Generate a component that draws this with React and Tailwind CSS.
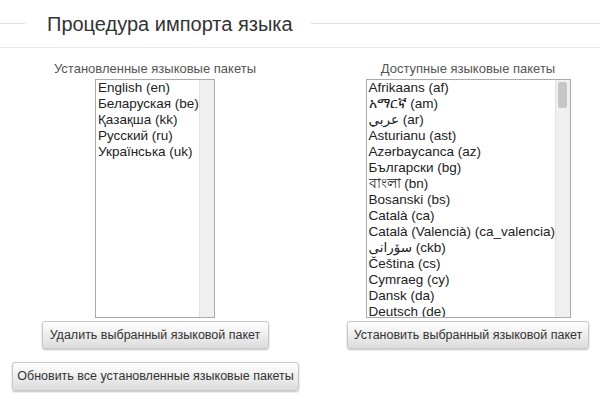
import React from 'react';

const installed = ['English (en)', 'Беларуская (be)', 'Қазақша (kk)', 'Русский (ru)', 'Українська (uk)'];

const available = [
  'Afrikaans (af)',
  'አማርኛ (am)',
  'عربي (ar)',
  'Asturianu (ast)',
  'Azərbaycanca (az)',
  'Български (bg)',
  'বাংলা (bn)',
  'Bosanski (bs)',
  'Català (ca)',
  'Català (Valencià) (ca_valencia)',
  'سۆرانی (ckb)',
  'Čeština (cs)',
  'Cymraeg (cy)',
  'Dansk (da)',
  'Deutsch (de)',
];

function Button({ children, className = '' }) {
  return (
    <button
      className={`h-[28px] whitespace-nowrap rounded-[3px] border border-[#c8c8c8] bg-gradient-to-b from-white to-[#dcdcdc] text-[12.5px] text-[#333] shadow-[0_1px_2px_rgba(0,0,0,0.25)] ${className}`}
    >
      {children}
    </button>
  );
}

function ListBox({ items, width, scrollable }) {
  return (
    <div className={`relative h-[239px] border border-[#aaa] bg-white overflow-hidden ${width}`}>
      <div className="pl-[2px] text-[13.5px] leading-[16px] text-[#222]">
        {items.map((it) => (
          <div key={it} className="whitespace-nowrap text-left" dir="ltr">
            {it}
          </div>
        ))}
      </div>
      <div className="absolute right-0 top-0 h-full w-[15px] border-l border-[#e2e2e2] bg-[#f0f0f0]">
        {scrollable && <div className="mx-auto mt-[2px] h-[26px] w-[9px] rounded-[2px] bg-[#c6c6c6]" />}
      </div>
    </div>
  );
}

export default function App() {
  return (
    <div className="w-[600px] h-[398px] bg-white overflow-hidden" style={{ fontFamily: '"Liberation Sans", Arial, "DejaVu Sans", "Noto Sans", sans-serif' }}>
      {/* Heading */}
      <div className="flex items-center h-[47px]">
        <div className="w-[25px] h-px bg-[#e0e0e0]" />
        <h2 className="pl-[22px] pr-[18px] text-[20px] text-[#333] leading-none">Процедура импорта языка</h2>
        <div className="flex-1 h-px bg-[#e0e0e0]" />
      </div>
      <div className="h-px bg-[#e8e8e8]" />

      <div className="flex pt-[11px]">
        <div className="w-[310px] flex flex-col items-center">
          <div className="text-[13px] leading-[20px] text-[#555]">Установленные языковые пакеты</div>
          <ListBox items={installed} width="w-[120px]" />
          <Button className="mt-[3px] w-[227px]">Удалить выбранный языковой пакет</Button>
        </div>
        <div className="ml-[26px] w-[264px] flex flex-col items-center">
          <div className="text-[13px] leading-[20px] text-[#555]">Доступные языковые пакеты</div>
          <ListBox items={available} width="w-[205px]" scrollable />
          <Button className="mt-[3px] w-[242px]">Установить выбранный языковой пакет</Button>
        </div>
      </div>

      <div className="pl-[12px] pt-[13px]">
        <Button className="w-[287px] h-[29px]">Обновить все установленные языковые пакеты</Button>
      </div>
    </div>
  );
}
